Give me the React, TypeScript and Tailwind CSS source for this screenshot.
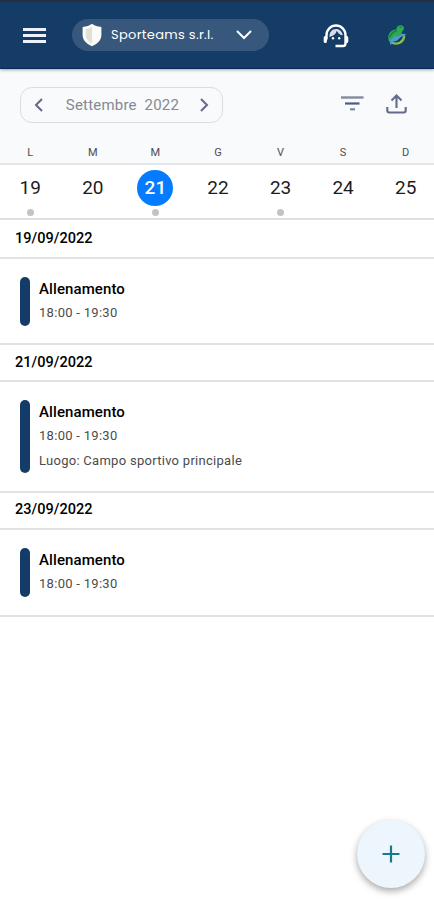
interface Day {
  letter: string;
  number: number;
  hasEvent?: boolean;
  selected?: boolean;
}

interface TeamEvent {
  date: string;
  title: string;
  time: string;
  place?: string;
}

const days: Day[] = [
  { letter: 'L', number: 19, hasEvent: true },
  { letter: 'M', number: 20 },
  { letter: 'M', number: 21, hasEvent: true, selected: true },
  { letter: 'G', number: 22 },
  { letter: 'V', number: 23, hasEvent: true },
  { letter: 'S', number: 24 },
  { letter: 'D', number: 25 },
];

const events: TeamEvent[] = [
  { date: '19/09/2022', title: 'Allenamento', time: '18:00 - 19:30' },
  {
    date: '21/09/2022',
    title: 'Allenamento',
    time: '18:00 - 19:30',
    place: 'Luogo: Campo sportivo principale',
  },
  { date: '23/09/2022', title: 'Allenamento', time: '18:00 - 19:30' },
];

function ShieldIcon() {
  return (
    <svg width="20" height="24" viewBox="0 0 20 24">
      <path d="M10 .8c2.500 1.900 5.500 2.900 9.400 3.200v8c0 5-4 9-9.400 11.300C4.600 21 .6 17 .6 12V4C4.500 3.700 7.500 2.700 10 .8Z" fill="#fbfcf7" />
      <path d="M10 3.700C8 5 6 5.600 3.700 5.900V12c0 3.600 2.500 6.600 6.300 8.400Z" fill="#e0e0da" />
    </svg>
  );
}

function SupportIcon() {
  return (
    <svg width="26" height="26" viewBox="0 0 26 26" fill="none" stroke="#fff">
      <path d="M3.500 16.500V12a9.500 9.500 0 0 1 19 0v8.500a2.500 2.500 0 0 1-2.500 2.500h-7.500" strokeWidth="2.400" />
      <path d="M2.300 14.500v4M23.700 14.500v4" strokeWidth="3.200" strokeLinecap="round" />
      <path d="M6.500 14c4-1 6.500-3.200 7.300-6.300 1.300 2.700 3.300 4.300 6 4.600C19.300 8.500 16.500 6 13 6c-4 0-6.800 3-6.500 8Z" fill="#d5dcee" stroke="none" />
      <circle cx="10" cy="15.300" r="1.200" fill="#fff" stroke="none" />
      <circle cx="16.200" cy="15.300" r="1.200" fill="#fff" stroke="none" />
    </svg>
  );
}

function TeamLogo() {
  return (
    <svg width="20" height="24" viewBox="0 0 20 24">
      <path d="M9.500 5.300C9.500 2.500 11.500 1 14 1.300c2.700.3 3.800 2.900 2.300 4.700-1.200 1.400-1.600 2.200-1.800 4L10 14l-8 3.500C-.3 11 3 6 9.500 5.300Z" fill="#2fa851" />
      <path d="M2.500 13.500c1.500-4 4-6 7.500-7M12.500 3.200l2 .1" stroke="#187e4b" strokeWidth="1.500" fill="none" />
      <path d="M5 18.800c5.500 2.200 11.300-.5 12.200-6.300" stroke="#8bbd43" strokeWidth="2.200" fill="none" strokeLinecap="round" />
      <path d="m2.500 17 5.500-5 3 .5 3.500-2.700 4.700.2-2.200 2.300-3 .5-4 4-3.700 1-2.800 3.500Z" fill="#4d9bc9" />
    </svg>
  );
}

function Header() {
  return (
    <header className="relative flex h-[69px] items-center border-t-2 border-[#252f3d] bg-[#143c66] shadow-[inset_0_-1px_0_#082a59,0_1px_3px_rgba(0,0,0,0.35)]">
      <button className="ml-[23px] flex h-[15px] w-[23px] flex-col justify-between">
        <span className="h-[3px] w-full bg-[#edf1fb]" />
        <span className="h-[3px] w-full bg-[#edf1fb]" />
        <span className="h-[3px] w-full bg-[#edf1fb]" />
      </button>
      <button className="mb-[2px] ml-[26px] flex h-8 w-[197px] items-center rounded-full bg-[#37577d] pl-[10px] text-white">
        <ShieldIcon />
        <span className="ml-[9px] w-[103px] text-left font-[Poppins,Lato,sans-serif] text-[13px] tracking-[0.3px] whitespace-nowrap">
          Sporteams s.r.l.
        </span>
        <svg className="ml-[21px]" width="18" height="12" viewBox="0 0 18 12" fill="none" stroke="#fff" strokeWidth="2">
          <path d="m2 2 7 7 7-7" />
        </svg>
      </button>
      <button className="ml-[54px]">
        <SupportIcon />
      </button>
      <button className="ml-[38px]">
        <TeamLogo />
      </button>
    </header>
  );
}

function Toolbar() {
  return (
    <div className="flex h-[54px] items-end bg-[#f8fafc]">
      <div className="ml-5 flex h-9 w-[203px] items-center justify-between rounded-xl border border-[#d9dee1] px-[13px] text-[#656985]">
        <svg width="9" height="14" viewBox="0 0 9 14" fill="none" stroke="currentColor" strokeWidth="2">
          <path d="M8 1 2 7l6 6" />
        </svg>
        <span className="ml-[2px] text-[15px] tracking-[0.2px] whitespace-pre text-[#858994]">Settembre  2022</span>
        <svg width="9" height="14" viewBox="0 0 9 14" fill="none" stroke="currentColor" strokeWidth="2">
          <path d="m1 1 6 6-6 6" />
        </svg>
      </div>
      <svg className="mb-[11px] ml-[118px]" width="23" height="17" viewBox="0 0 23 17">
        <path d="M0 2.500h22.500" stroke="#85889f" strokeWidth="2.400" />
        <path d="M4 8.500h14.500" stroke="#4c5c87" strokeWidth="2.200" />
        <path d="M9 14.300h5" stroke="#85889f" strokeWidth="2.200" />
      </svg>
      <svg className="mb-[9px] ml-[22px]" width="21" height="21" viewBox="0 0 21 21" fill="none" stroke="#646a8b" strokeWidth="2.100">
        <path d="M10.500 15V2.500M5.500 7.500l5-5 5 5M1.300 14v3.500a2 2 0 0 0 2 2h14.400a2 2 0 0 0 2-2V14" />
      </svg>
    </div>
  );
}

function WeekStrip() {
  return (
    <>
      <div className="bg-[#f8fafc]">
        <div className="-mr-[3px] -ml-px grid h-[40px] grid-cols-7">
          {days.map((day) => (
            <span key={day.number} className="pt-[20px] text-center text-[11px] leading-5 text-[#4c4c50]">
              {day.letter}
            </span>
          ))}
        </div>
      </div>
      <div className="h-[2px] bg-[#e3e5e8]" />
      <div className="-mr-[3px] -ml-px grid h-[53px] grid-cols-7">
        {days.map((day) => (
          <div key={day.number} className="flex flex-col items-center pt-[5px]">
            <span
              className={`flex size-9 items-center justify-center rounded-full text-[19px] ${
                day.selected ? 'bg-[#057cff] font-medium text-white' : 'text-[#1c1c1c]'
              }`}
            >
              {day.number}
            </span>
            {day.hasEvent && <span className="mt-[3px] size-[7px] rounded-full bg-[#c3c3c3]" />}
          </div>
        ))}
      </div>
      <div className="h-[2px] bg-[#e0e0e1]" />
    </>
  );
}

function EventSection({ event }: { event: TeamEvent }) {
  return (
    <section className="group">
      <h2 className="flex h-[37px] items-center border-b-2 border-[#e2e2e2] pl-[15px] text-[14.5px] font-medium tracking-[0.02px] text-black group-first:h-[39px]">
        {event.date}
      </h2>
      <div className="flex border-b-2 border-[#e2e2e2] pt-[17.5px] pb-[17.5px] pl-5 group-last:pt-[18px] group-last:pb-[18px]">
        <div className="w-[10px] rounded-full bg-[#133c68]" />
        <div className="ml-[9px] text-[13px] leading-[24.5px] text-[#4b4b4b]">
          <h3 className="text-[15px] font-medium tracking-[0.1px] text-black">{event.title}</h3>
          <p className="tracking-[0.29px]">{event.time}</p>
          {event.place && <p className="tracking-[0.28px]">{event.place}</p>}
        </div>
      </div>
    </section>
  );
}

export default function App() {
  return (
    <div className="relative h-[900px] w-[434px] overflow-hidden bg-white font-[Roboto,sans-serif]">
      <Header />
      <Toolbar />
      <WeekStrip />
      <main>
        {events.map((event) => (
          <EventSection key={event.date} event={event} />
        ))}
      </main>
      <button className="absolute right-[9px] bottom-[12px] flex size-[68px] items-center justify-center rounded-full bg-[#edf6fc] shadow-[0_3px_7px_rgba(0,0,0,0.35)]">
        <svg width="18" height="18" viewBox="0 0 18 18" stroke="#18788f" strokeWidth="2.200">
          <path d="M9 .5v17M.5 9h17" />
        </svg>
      </button>
    </div>
  );
}
